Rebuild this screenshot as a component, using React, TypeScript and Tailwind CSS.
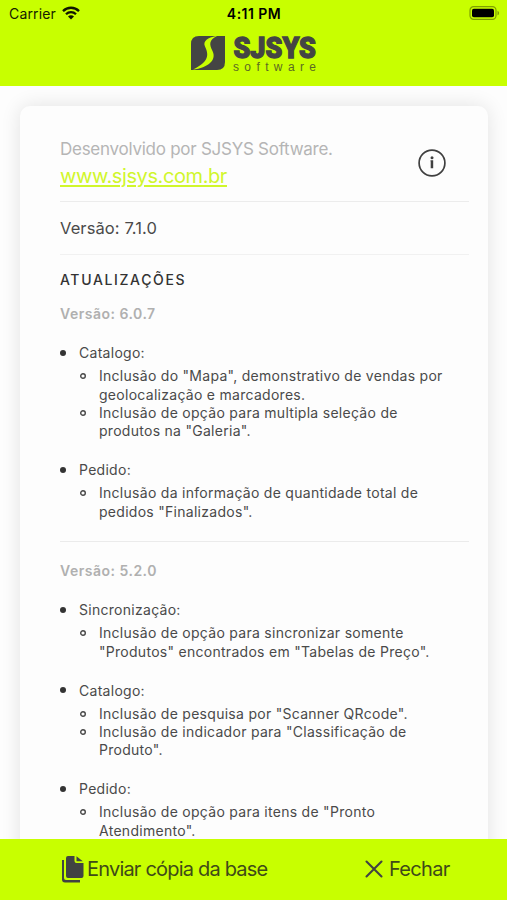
import React from "react";

type Group = { title: string; items: string[][] };
type Release = { version: string; groups: Group[] };

const releases: Release[] = [
  {
    version: "6.0.7",
    groups: [
      {
        title: "Catalogo:",
        items: [
          ['Inclusão do "Mapa", demonstrativo de vendas por', "geolocalização e marcadores."],
          ["Inclusão de opção para multipla seleção de", 'produtos na "Galeria".'],
        ],
      },
      {
        title: "Pedido:",
        items: [["Inclusão da informação de quantidade total de", 'pedidos "Finalizados".']],
      },
    ],
  },
  {
    version: "5.2.0",
    groups: [
      {
        title: "Sincronização:",
        items: [["Inclusão de opção para sincronizar somente", '"Produtos" encontrados em "Tabelas de Preço".']],
      },
      {
        title: "Catalogo:",
        items: [
          ['Inclusão de pesquisa por "Scanner QRcode".'],
          ['Inclusão de indicador para "Classificação de', 'Produto".'],
        ],
      },
      {
        title: "Pedido:",
        items: [['Inclusão de opção para itens de "Pronto', 'Atendimento".']],
      },
    ],
  },
];

function StatusBar() {
  return (
    <div className="grid h-[27px] grid-cols-3 items-center pl-[9px] pr-[7px] text-[14px] leading-[27px] text-[#152000]">
      <div className="flex items-center gap-[6px]">
        <span className="tracking-[0.150px]">Carrier</span>
        <svg className="-mt-[2px]" width="18" height="14" viewBox="0 0 18 14" fill="none" stroke="#111800" strokeWidth="2.3">
          <path d="M1 5.1C5.5.6 12.500.6 17 5.100" />
          <path d="M4 8.300C6.800 5.500 11.200 5.500 14 8.300" />
          <path d="M6 10.600C7.700 8.900 10.300 8.900 12 10.600L9 13.600Z" fill="#111800" stroke="none" />
        </svg>
      </div>
      <span className="pr-[1px] text-center text-[14px] font-semibold tracking-[0.450px] text-black">4:11 PM</span>
      <div className="flex justify-end">
        <svg className="-mt-[1px]" width="31" height="14" viewBox="0 0 31 14">
          <rect x="1" y="0.700" width="26" height="12.600" rx="3.600" fill="none" stroke="#7fa000" strokeWidth="1.200" />
          <rect x="3" y="2.700" width="22" height="8.600" rx="1.800" fill="#000" />
          <path d="M28.500 4.700C30.600 5.600 30.600 8.400 28.500 9.300Z" fill="#7fa000" />
        </svg>
      </div>
    </div>
  );
}

function Logo() {
  return (
    <div className="flex justify-center pl-[2px] pt-[9px]">
      <svg className="overflow-visible" width="128" height="38" viewBox="0 0 128 38">
        <path d="M8 0H34V26Q34 34 26 34H0V8Q0 0 8 0Z" fill="#444544" />
        <path d="M25 0C17 1.500 11.500 5 14 10.500C17 17 20 25 2 33.500C17 32 26 24 21.500 15C18 8 18 4 26 0Z" fill="#c8ff00" />
        <text x="42.500" y="22.300" textLength="82.500" lengthAdjust="spacingAndGlyphs" fill="#444544" stroke="#444544" strokeWidth="1.300" className="font-['Roboto'] text-[29.500px] font-black">
          SJSYS
        </text>
        <text x="42" y="34.500" textLength="83" fill="#5b6a22" className="font-['Liberation_Sans'] text-[12px]">
          software
        </text>
      </svg>
    </div>
  );
}

function ReleaseNotes({ release }: { release: Release }) {
  return (
    <section>
      <h3 className="mb-[21px] text-[14px] font-semibold leading-[18.350px] tracking-[0.500px] text-[#b0b0b0]">
        Versão: {release.version}
      </h3>
      <ul className="flex flex-col gap-[20.400px]">
        {release.groups.map((g, i) => (
          <li key={i}>
            <div className="flex items-center leading-[18.350px]">
              <span className="-mt-[1px] mr-[13px] size-[6px] rounded-full bg-[#333]" />
              {g.title}
            </div>
            <ul className="mt-[4.900px] pl-[20px]">
              {g.items.map((lines, j) => (
                <li key={j} className="flex items-start">
                  <svg className="mr-[13px] mt-[6px] shrink-0" width="6" height="6" viewBox="0 0 6 6">
                    <circle cx="3" cy="3" r="2.300" fill="none" stroke="#484848" strokeWidth="1.400" />
                  </svg>
                  <div>
                    {lines.map((l) => (
                      <p key={l} className="whitespace-nowrap leading-[18.350px]">{l}</p>
                    ))}
                  </div>
                </li>
              ))}
            </ul>
          </li>
        ))}
      </ul>
    </section>
  );
}

export default function App() {
  return (
    <div className="flex h-[900px] w-[507px] flex-col overflow-hidden bg-[#fdfdfd] font-['Inter','Liberation_Sans',sans-serif] text-[#4a4a4a]">
      <header className="h-[86px] shrink-0 bg-[#c8ff00]">
        <StatusBar />
        <Logo />
      </header>
      <main className="h-[753px] shrink-0 overflow-hidden pl-5 pr-[19px] pt-5">
        <article className="h-[800px] rounded-[10px] bg-[#fdfdfd] pl-10 pr-[19px] shadow-[0_0_20px_rgba(0,0,0,0.110)]">
          <div className="flex h-[96px] items-start justify-between border-b border-[#ececec] pr-[23px]">
            <div className="pt-[31px]">
              <p className="text-[17px] leading-[24px] tracking-[-0.260px] text-[#b5b5b5]">Desenvolvido por SJSYS Software.</p>
              <a className="block text-[20px] leading-[31px] tracking-[-0.400px] text-[#d0f62c] underline decoration-[1.500px] underline-offset-[2px]">www.sjsys.com.br</a>
            </div>
            <svg className="mt-[43px]" width="28" height="28" viewBox="0 0 28 28" fill="#404040">
              <circle cx="14" cy="14" r="12.900" fill="none" stroke="#404040" strokeWidth="1.700" />
              <circle cx="14" cy="8.700" r="1.500" />
              <path d="M12.500 11.300H15.200V19.300H12.700V12.500H12.500Z" />
            </svg>
          </div>
          <p className="h-[53px] border-b border-[#f1f1f1] text-[16.500px] leading-[53px] tracking-[0.100px]">Versão: 7.1.0</p>
          <h2 className="mb-[15.600px] mt-[16px] text-[14px] font-medium leading-[18px] tracking-[1.650px] text-[#333]">ATUALIZAÇÕES</h2>
          <div className="text-[14px] tracking-[0.280px]">
            <ReleaseNotes release={releases[0]} />
            <hr className="my-[20px] border-[#ebebeb]" />
            <ReleaseNotes release={releases[1]} />
          </div>
        </article>
      </main>
      <footer className="flex h-[61px] shrink-0 items-center bg-[#c8ff00] pl-[61px] text-[20px] text-[#3f4a18]">
        <svg className="-mt-[2px]" width="24" height="28" viewBox="0 0 24 28" fill="#414342">
          <path d="M7 1H13.500V6Q13.500 8 15.500 8H22.500V21Q22.500 23 20.500 23H7Q5 23 5 21V3Q5 1 7 1Z" />
          <path d="M15.500 1.200L21.800 6.300H15.500Z" />
          <path d="M1 5H3V23Q3 25 5 25H19V27.500H4Q1 27.500 1 24.500Z" />
        </svg>
        <span className="-mt-[1px] ml-[2px] w-[278px] whitespace-nowrap tracking-[-0.800px]">Enviar cópia da base</span>
        <svg className="-mt-[2px]" width="18" height="18" viewBox="0 0 18 18" stroke="#414342" strokeWidth="2.100" strokeLinecap="round">
          <path d="M1.500 1.500L16.500 16.500M16.500 1.500L1.500 16.500" />
        </svg>
        <span className="-mt-[1px] ml-[6px] tracking-[-0.700px]">Fechar</span>
      </footer>
    </div>
  );
}
